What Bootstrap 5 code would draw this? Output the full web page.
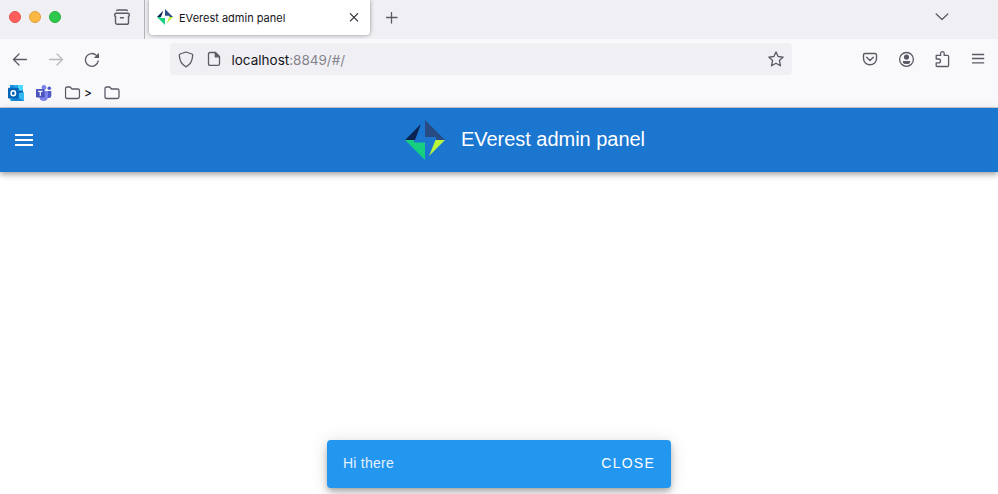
<!DOCTYPE html>
<html lang="en">
<head>
<meta charset="utf-8">
<meta name="viewport" content="width=device-width, initial-scale=1">
<title>EVerest admin panel</title>
<link href="https://cdn.jsdelivr.net/npm/bootstrap@5.3.0/dist/css/bootstrap.min.css" rel="stylesheet">
<style>
body{font-family:Inter,"Liberation Sans",sans-serif;color:#15141a;background:#fff}
svg{display:block;flex:none}
.bare{background:none;border:0;padding:0;color:#5b5b66}
.tabstrip{height:39px;background:#f0eff4}
.lights{padding:11px 0 0 9px;gap:8px;width:114px}
.light{width:12px;height:12px;border-radius:50%;border:1px solid}
.light-r{background:#ff5f5c;border-color:#e8504b}
.light-y{background:#fdb843;border-color:#e1a13a}
.light-g{background:#2fc84e;border-color:#22b03c}
.view-btn{width:31px;height:39px;padding-top:9px;border-right:1px solid #b3b2b9}
.tab{width:221px;height:35px;margin-left:4px;padding:0 11px 0 8px;background:#fff;border-radius:0 0 4px 4px;box-shadow:0 0 4px rgba(0,0,0,.4);font-size:11px;color:#15141a}
.tab-icon{margin-bottom:2px}
.tab-label{margin-left:6px;padding-top:2px}
.toolbar-row{height:40px;background:#f9f9fb}
.navbtns{gap:20px;padding-left:12px;width:170px}
.urlbox{width:622px;height:32px;border-radius:4px;background:#f0eff4;padding:0 8px}
.page-icon{margin-left:13px}
.url-text{font-size:13.5px;margin-left:10.5px;color:#15141a;padding-top:2px}
.url-text span{color:#85848c}
.tools{margin-left:70px;gap:20px}
.bookmarks{height:29px;background:#f9f9fb;border-bottom:1px solid #ccccd0;padding:0 0 0 8px;font-size:11px}
.crumb{width:12px;padding-left:3px;margin-right:3px;font-weight:500;font-size:12px}
.appbar{height:64px;background:#1b76cf;box-shadow:0 2px 4px -1px rgba(0,0,0,.2),0 4px 5px rgba(0,0,0,.14),0 1px 10px rgba(0,0,0,.12);padding-left:12px;font-family:"Liberation Sans",sans-serif}
.brand{margin-left:369px;gap:16px}
.brand h1{font-size:20px;font-weight:400;line-height:24px;color:#fff;padding-bottom:2px;letter-spacing:-.03px}
.toast-area{padding-bottom:6px}
.snack{width:344px;height:48px;padding:0 16px 2px;border-radius:4px;background:#2396ef;color:#fff;font:14px "Liberation Sans",sans-serif;box-shadow:0 3px 5px -1px rgba(0,0,0,.2),0 6px 10px rgba(0,0,0,.14),0 1px 18px rgba(0,0,0,.12)}
.snack-text{letter-spacing:.25px;color:#e4f2fd}
.snack-btn{color:#fff;letter-spacing:1.25px}
</style>
</head>
<body class="vh-100 d-flex flex-column overflow-hidden">
<svg width="0" height="0" class="position-absolute" aria-hidden="true">
<symbol id="logo" viewBox="0 0 40 40"><path fill="#0a2351" d="M0 20 16 4 10 20z"/><path fill="#274b82" d="M20 0 40 20H31V17H20z"/><path fill="#16cf80" d="M0 20H9V22.6H20V40z"/><path fill="#b9f53c" d="M30.5 20H40L24 36z"/></symbol>
<symbol id="folder" viewBox="0 0 16 14"><path d="M1 10.8V2.7Q1 1 2.7 1H5.6L7.5 3H13.3Q15 3 15 4.7V10.8Q15 12.5 13.3 12.5H2.7Q1 12.5 1 10.8z" fill="none" stroke="#5b5b66" stroke-width="1.3"/></symbol>
</svg>
<div class="tabstrip d-flex align-items-start flex-shrink-0">
<div class="lights d-flex"><i class="light light-r"></i><i class="light light-y"></i><i class="light light-g"></i></div>
<button class="bare view-btn d-flex align-items-start" aria-label="View"><svg width="16" height="17" viewBox="0 0 16 17" fill="none" stroke="currentColor" stroke-width="1.4" stroke-linecap="round"><path d="M2.7 1.5Q2.9 1 3.8 1H12.2Q13.1 1 13.3 1.5"/><path d="M.7 6.6V5.6Q.7 4.2 2.1 4.2H13.9Q15.3 4.2 15.3 5.6V6.6Q15.3 7.4 14.5 7.4V13.4Q14.5 15.3 12.6 15.3H3.4Q1.5 15.3 1.5 13.4V7.4Q.7 7.4 .7 6.6zM6.5 8.7H9.5"/></svg></button>
<div class="tab d-flex align-items-center"><svg class="tab-icon" width="16" height="16"><use href="#logo"/></svg><span class="tab-label">EVerest admin panel</span><button class="bare ms-auto" aria-label="Close tab"><svg width="10" height="10" viewBox="0 0 10 10" stroke="#2b2a33" stroke-width="1.1"><path d="M1 .3 9 8.3M9 .3 1 8.3"/></svg></button></div>
<button class="bare ms-3 mt-2 pt-1" aria-label="New tab"><svg width="12" height="12" viewBox="0 0 12 12" stroke="currentColor" stroke-width="1.3" stroke-linecap="round"><path d="M5.5 .5V11M.3 5.5H11"/></svg></button>
<button class="bare ms-auto me-5 pt-2 mt-1" aria-label="Tabs"><svg width="15" height="9" viewBox="0 0 15 9" fill="none" stroke="currentColor" stroke-width="1.3" stroke-linecap="round" stroke-linejoin="round"><path d="M1.2 2 7 7.5 12.8 2"/></svg></button>
</div>
<div class="toolbar-row d-flex align-items-center flex-shrink-0">
<div class="navbtns d-flex">
<button class="bare" aria-label="Back"><svg width="16" height="16" viewBox="0 0 16 16" fill="none" stroke="currentColor" stroke-width="1.3" stroke-linecap="round" stroke-linejoin="round"><path d="M14.5 8.5H1.6M7 3 1.5 8.5 7 14"/></svg></button>
<button class="bare" aria-label="Forward"><svg width="16" height="16" viewBox="0 0 16 16" fill="none" stroke="#b9b9be" stroke-width="1.3" stroke-linecap="round" stroke-linejoin="round"><path d="M1.5 8.5H14.4M9 3 14.5 8.5 9 14"/></svg></button>
<button class="bare" aria-label="Reload"><svg width="16" height="16" viewBox="0 0 16 16" fill="none" stroke="currentColor" stroke-width="1.3" stroke-linecap="round"><path d="M14.2 9.8A6.4 6.4 0 1 1 12.4 4.4"/><path d="M15 1.8V6.9H9.9z" fill="currentColor" stroke="none"/></svg></button>
</div>
<div class="urlbox d-flex align-items-center">
<svg width="16" height="17" viewBox="0 0 16 17" fill="none" stroke="#5b5b66" stroke-width="1.3" stroke-linejoin="round"><path d="M8 1 13.9 3Q14.8 3.3 14.7 4.3 14.3 12.8 8 15.8 1.7 12.8 1.3 4.3 1.2 3.3 2.1 3z"/></svg>
<svg class="page-icon" width="14" height="16" viewBox="0 0 14 16" fill="none" stroke="#5b5b66" stroke-width="1.3" stroke-linejoin="round"><path d="M1.5 12.8V3Q1.5 1.5 3 1.5H8.3L12.5 5.8V12.8Q12.5 14.4 11 14.4H3Q1.5 14.4 1.5 12.8z"/><path fill="#5b5b66" d="M8.3 1.5V5.8H12.5z"/></svg>
<div class="url-text">localhost<span>:8849/#/</span></div>
<svg class="ms-auto" width="16" height="16" viewBox="0 0 16 16" fill="none" stroke="#5b5b66" stroke-width="1.3" stroke-linejoin="round"><path d="M8 .9 10.1 5.5 15.2 6.1 11.4 9.5 12.5 14.8 8 12.2 3.5 14.8 4.6 9.5.8 6.1 5.9 5.5z"/></svg>
</div>
<div class="tools d-flex">
<button class="bare" aria-label="Pocket"><svg width="16" height="16" viewBox="0 0 16 16" fill="none" stroke="currentColor" stroke-width="1.4" stroke-linecap="round" stroke-linejoin="round"><path d="M3 2.5H13Q14.5 2.5 14.5 4V7.5A6.5 6.2 0 0 1 1.5 7.5V4Q1.5 2.5 3 2.5zM4.7 6.3 8 9.4 11.3 6.3"/></svg></button>
<button class="bare" aria-label="Account"><svg width="17" height="16" viewBox="0 0 17 16"><circle cx="8.5" cy="8.4" r="6.9" fill="none" stroke="currentColor" stroke-width="1.3"/><circle cx="8.5" cy="6.1" r="2.6" fill="currentColor"/><path fill="currentColor" d="M4.7 9.9H12.3Q12.3 13.1 8.5 13.1 4.7 13.1 4.7 9.9z"/></svg></button>
<button class="bare" aria-label="Extensions"><svg width="16" height="18" viewBox="0 0 16 18" fill="none" stroke="currentColor" stroke-width="1.3" stroke-linejoin="round"><path d="M1.2 8V5.4H5.6V3.5A1.8 1.8 0 0 1 9.2 3.5V5.4H12.5Q13.6 5.4 13.6 6.5V15.4Q13.6 16.5 12.5 16.5H2.3Q1.2 16.5 1.2 15.4V12.8H3.6A1.9 1.9 0 0 0 3.6 9H1.2z"/></svg></button>
<button class="bare" aria-label="Menu"><svg width="14" height="16" viewBox="0 0 14 16" stroke="currentColor" stroke-width="1.3"><path d="M1 3.5H13.2M1 7.5H13.2M1 11.8H13.2"/></svg></button>
</div>
</div>
<div class="bookmarks d-flex align-items-center flex-shrink-0">
<svg width="16" height="16" viewBox="0 0 16 16"><path fill="#1490df" d="M2 0H9V7H2z"/><path fill="#28a8ea" d="M6 0H15V9H6z"/><path fill="#50d9ff" d="M10 0H15V5H10z"/><path fill="#0f5ea8" d="M6 6H15V10L10 12z"/><path fill="#35b8f1" d="M2 10 16 7V16H3Q2 16 2 15z"/><path fill="#1784d5" d="M6 10 16 16H3z"/><rect y="2.8" width="10.8" height="10.8" rx="1" fill="#0364b8"/><ellipse cx="5.3" cy="8.2" rx="2.2" ry="2.5" fill="none" stroke="#fff" stroke-width="1.5"/></svg>
<svg class="ms-2 ps-1" width="20" height="16" viewBox="0 0 16 16"><circle cx="13.3" cy="3.3" r="1.8" fill="#5059c9"/><path fill="#5059c9" d="M10 6H15.3V10.5Q15.3 13 13 13H10z"/><circle cx="8" cy="2.5" r="2.4" fill="#7b83eb"/><path fill="#7b83eb" d="M3.5 6H12V11Q12 16 7.8 16 3.5 16 3.5 12z"/><rect y="4" width="8.6" height="8.6" rx=".8" fill="#4b53bc"/><path d="M2.2 6.3H6.5M4.3 6.3V10.7" stroke="#fff" stroke-width="1.2"/></svg>
<svg class="ms-2 ps-1" width="21" height="14" viewBox="0 0 16 14"><use href="#folder"/></svg><span class="crumb">&gt;</span>
<svg class="ms-2" width="16" height="14" viewBox="0 0 16 14"><use href="#folder"/></svg>
</div>
<header class="appbar d-flex align-items-center flex-shrink-0">
<button class="bare" aria-label="Open navigation"><svg width="24" height="24" viewBox="0 0 24 24" fill="#fff"><path d="M3 6H21V8H3zM3 11H21V13H3zM3 16H21V18H3z"/></svg></button>
<div class="brand d-flex align-items-center"><svg width="40" height="40"><use href="#logo"/></svg><h1 class="m-0">EVerest admin panel</h1></div>
</header>
<main class="toast-area flex-grow-1 d-flex justify-content-center align-items-end">
<div class="snack d-flex align-items-center justify-content-between"><span class="snack-text">Hi there</span><button class="bare snack-btn">CLOSE</button></div>
</main>
<script src="https://cdn.jsdelivr.net/npm/bootstrap@5.3.0/dist/js/bootstrap.bundle.min.js"></script>
</body>
</html>
